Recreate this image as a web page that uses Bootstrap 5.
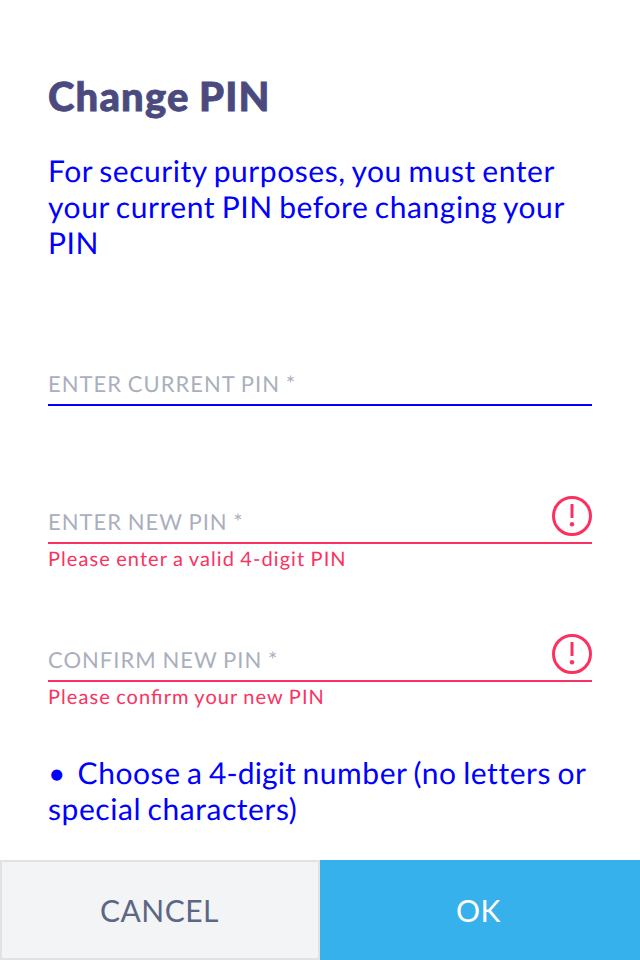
<!DOCTYPE html>
<html lang="en">
<head>
<meta charset="utf-8">
<meta name="viewport" content="width=device-width, initial-scale=1">
<title>Change PIN</title>
<link href="https://cdn.jsdelivr.net/npm/bootstrap@5.3.0/dist/css/bootstrap.min.css" rel="stylesheet">
<style>
body{font-family:Lato,"Liberation Sans",sans-serif;height:960px;overflow:hidden;background:#fff;text-rendering:geometricPrecision}
.pin-main{padding:71px 48px 0;height:860px}
.pin-title{font-size:40px;line-height:50px;font-weight:900;color:#4a4a7f;letter-spacing:1.2px;word-spacing:-1.5px;-webkit-text-stroke:.8px #4a4a7f}
.pin-text{font-size:30px;line-height:36px;color:#00f;letter-spacing:.56px;word-spacing:-1.7px}
.pin-intro{margin:32px 0 85px}
.pin-field{height:138px}
.pin-line{height:60px;border-bottom:2px solid #00f;padding-bottom:6px}
.pin-label{font-size:22px;line-height:28px;color:#aaafbd;letter-spacing:1.02px;word-spacing:-1px}
.pin-error .pin-line{border-color:#fb2f60}
.pin-message{font-size:20px;line-height:30px;color:#f93362;letter-spacing:1.08px;word-spacing:-.9px;font-feature-settings:"liga" 1}
.pin-rule{margin-top:-5px}
.pin-bullet{margin-right:-1.5px}
.pin-length{letter-spacing:.1px}
.pin-actions{height:100px}
.pin-button{border-radius:0;font-size:30px;letter-spacing:.5px;border-width:2px}
.pin-cancel,.pin-cancel:hover{background:#f2f4f6;border-color:#e0e3e6;color:#5d6684;padding-right:13px}
.pin-ok,.pin-ok:hover{background:#36b1ec;border-color:#36b1ec;color:#fff;padding-right:15px}
</style>
</head>
<body>
<form class="d-flex flex-column" novalidate>
<main class="pin-main">
<h1 class="pin-title mb-0">Change PIN</h1>
<p class="pin-text pin-intro">For security purposes, you must enter<br>your current PIN before changing your<br>PIN</p>
<div class="pin-field"><div class="pin-line d-flex align-items-end"><label class="pin-label">ENTER CURRENT PIN *</label></div></div>
<div class="pin-field pin-error"><div class="pin-line d-flex align-items-end justify-content-between"><label class="pin-label">ENTER NEW PIN *</label><svg width="40" height="40" viewBox="0 0 40 40" fill="none" stroke="#fb3160" stroke-width="3"><circle cx="20" cy="20" r="18.5"/><path d="M20 8v14"/><circle cx="20" cy="28.2" r="2.2" fill="#fb3160" stroke="none"/></svg></div><div class="pin-message">Please enter a valid 4-digit PIN</div></div>
<div class="pin-field pin-error"><div class="pin-line d-flex align-items-end justify-content-between"><label class="pin-label">CONFIRM NEW PIN *</label><svg width="40" height="40" viewBox="0 0 40 40" fill="none" stroke="#fb3160" stroke-width="3"><circle cx="20" cy="20" r="18.5"/><path d="M20 8v14"/><circle cx="20" cy="28.2" r="2.2" fill="#fb3160" stroke="none"/></svg></div><div class="pin-message">Please confirm your new PIN</div></div>
<p class="pin-text pin-rule mb-0 text-nowrap"><span class="pin-bullet">•</span>&nbsp; Choose a <span class="pin-length">4-digit</span> number (no letters or<br>special characters)</p>
</main>
<footer class="pin-actions d-flex"><button type="button" class="btn pin-button pin-cancel w-50">CANCEL</button><button type="button" class="btn pin-button pin-ok w-50">OK</button></footer>
</form>
<script src="https://cdn.jsdelivr.net/npm/bootstrap@5.3.0/dist/js/bootstrap.bundle.min.js"></script>
</body>
</html>
